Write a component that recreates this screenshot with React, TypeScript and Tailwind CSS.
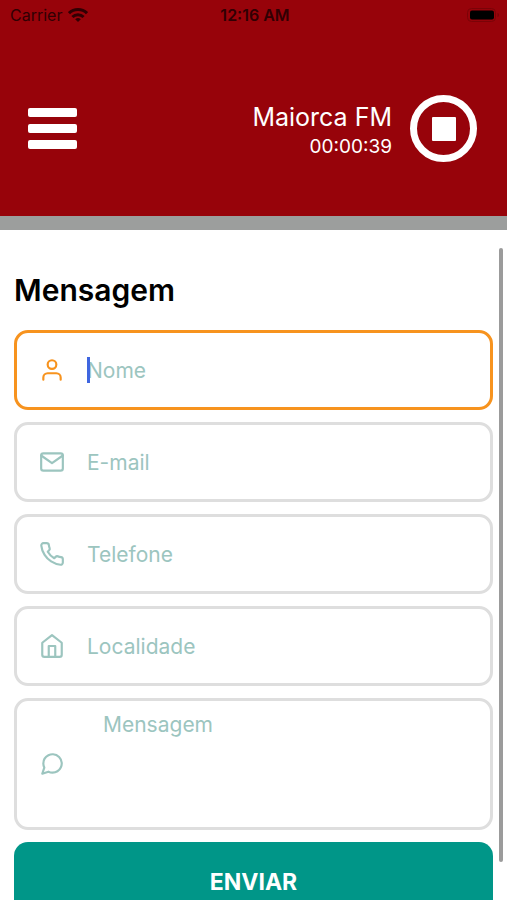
import { ReactNode } from 'react'
import { IconType } from 'react-icons'
import { FiHome, FiMail, FiMessageCircle, FiPhone, FiUser } from 'react-icons/fi'
import { clsx } from 'clsx'

/* ── Status bar ── */
const WifiIcon = () => (
  <svg viewBox="0 0 20 14" className="h-[14px] w-5" aria-hidden="true">
    <g fill="none" stroke="currentColor" strokeWidth="3">
      <path d="M1 5.200a12.800 12.800 0 0 1 18 0" />
      <path d="M4.400 9a8 8 0 0 1 11.200 0" />
    </g>
    <path d="M10 14 7.200 11.300a4 4 0 0 1 5.600 0Z" fill="currentColor" />
  </svg>
)

const BatteryIcon = () => (
  <svg viewBox="0 0 33 14" className="h-[14px] w-[33px]" aria-hidden="true">
    <rect x="0.5" y="0.5" width="28" height="13" rx="4" fill="none" stroke="#7a0307" />
    <rect x="3" y="2.5" width="24" height="9" rx="2" fill="#000" />
    <path d="M30.500 5v4c1-.3 1.500-1.100 1.500-2s-.5-1.700-1.500-2Z" fill="#7a0307" />
  </svg>
)

const StatusBar = () => (
  <div className="grid h-[30px] grid-cols-3 items-center pr-[7px] pl-[10px] text-[16px] leading-5 text-[#300003]">
    <div className="flex items-center gap-[6px]">
      <span>Carrier</span>
      <WifiIcon />
    </div>
    <span className="text-center font-semibold">12:16 AM</span>
    <div className="flex justify-end">
      <BatteryIcon />
    </div>
  </div>
)

/* ── Player header ── */
const Header = () => (
  <header className="shrink-0 border-b-[14px] border-[#9c9e9d] bg-[#97030a] pb-[54px]">
    <StatusBar />
    <div className="flex items-center justify-between pt-[65px] pr-[30px] pl-7 text-white">
      <button type="button" aria-label="Menu" className="flex w-[49px] flex-col gap-[7px]">
        <span className="h-[9px] rounded-xs bg-white" />
        <span className="h-[9px] rounded-xs bg-white" />
        <span className="h-[9px] rounded-xs bg-white" />
      </button>
      <div className="flex items-center gap-[18px]">
        <div className="pt-1 text-right">
          <p className="text-[25px] leading-8">Maiorca FM</p>
          <p className="text-[19px] leading-7">00:00:39</p>
        </div>
        <button
          type="button"
          aria-label="Parar"
          className="flex size-[67px] items-center justify-center rounded-full border-[7px] border-white"
        >
          <span className="size-6 rounded-[1px] bg-white" />
        </button>
      </div>
    </div>
  </header>
)

/* ── Field wrapper: border, leading icon ── */
const Field = ({
  id,
  label,
  icon: Icon,
  active,
  children,
}: {
  id: string
  label: string
  icon: IconType
  active?: boolean
  children: ReactNode
}) => (
  <div
    className={clsx(
      'flex items-center rounded-[14px] border-[3px] pr-4 pl-[22px]',
      active ? 'border-[#f7931e]' : 'border-[#dedede]'
    )}
  >
    <label htmlFor={id} aria-label={label} className={active ? 'text-[#f7931e]' : 'text-[#9cc5bf]'}>
      <Icon className="size-[26px]" />
    </label>
    {children}
  </div>
)

const fields = [
  { id: 'nome', label: 'Nome', type: 'text', icon: FiUser, active: true },
  { id: 'email', label: 'E-mail', type: 'email', icon: FiMail, active: false },
  { id: 'telefone', label: 'Telefone', type: 'tel', icon: FiPhone, active: false },
  { id: 'localidade', label: 'Localidade', type: 'text', icon: FiHome, active: false },
]

export default function App() {
  return (
    <div className="flex h-screen flex-col bg-white font-['Inter',sans-serif]">
      <Header />
      <main className="relative min-h-0 flex-1">
        <div className="h-full overflow-y-auto px-[14px] pt-10 pb-4 [scrollbar-width:none]">
          <h1 className="text-[30px] leading-10 font-semibold text-black">Mensagem</h1>
          <form className="mt-5 flex flex-col gap-3">
            {fields.map(({ id, label, type, icon, active }) => (
              <Field key={id} id={id} label={label} icon={icon} active={active}>
                <div className="relative ml-[22px] flex-1">
                  <input
                    id={id}
                    type={type}
                    placeholder={label}
                    className="h-[74px] w-full text-[21px] outline-none placeholder:text-[#9cc5bf]"
                  />
                  {active && <span className="absolute top-6 left-0 h-[26px] w-[3px] bg-[#3f66e0]" />}
                </div>
              </Field>
            ))}
            <Field id="mensagem" label="Mensagem" icon={FiMessageCircle}>
              <textarea
                id="mensagem"
                placeholder="Mensagem"
                className="ml-[38px] h-[126px] flex-1 resize-none pt-[10px] text-[21px] leading-7 outline-none placeholder:text-[#9cc5bf]"
              />
            </Field>
            <button
              type="submit"
              className="h-20 shrink-0 rounded-[14px] bg-[#009688] text-[23px] font-bold text-white"
            >
              ENVIAR
            </button>
          </form>
        </div>
        {/* Scroll indicator */}
        <span className="absolute top-[18px] right-1 bottom-[38px] w-1 rounded-full bg-[#9b9b9b]" />
      </main>
    </div>
  )
}
